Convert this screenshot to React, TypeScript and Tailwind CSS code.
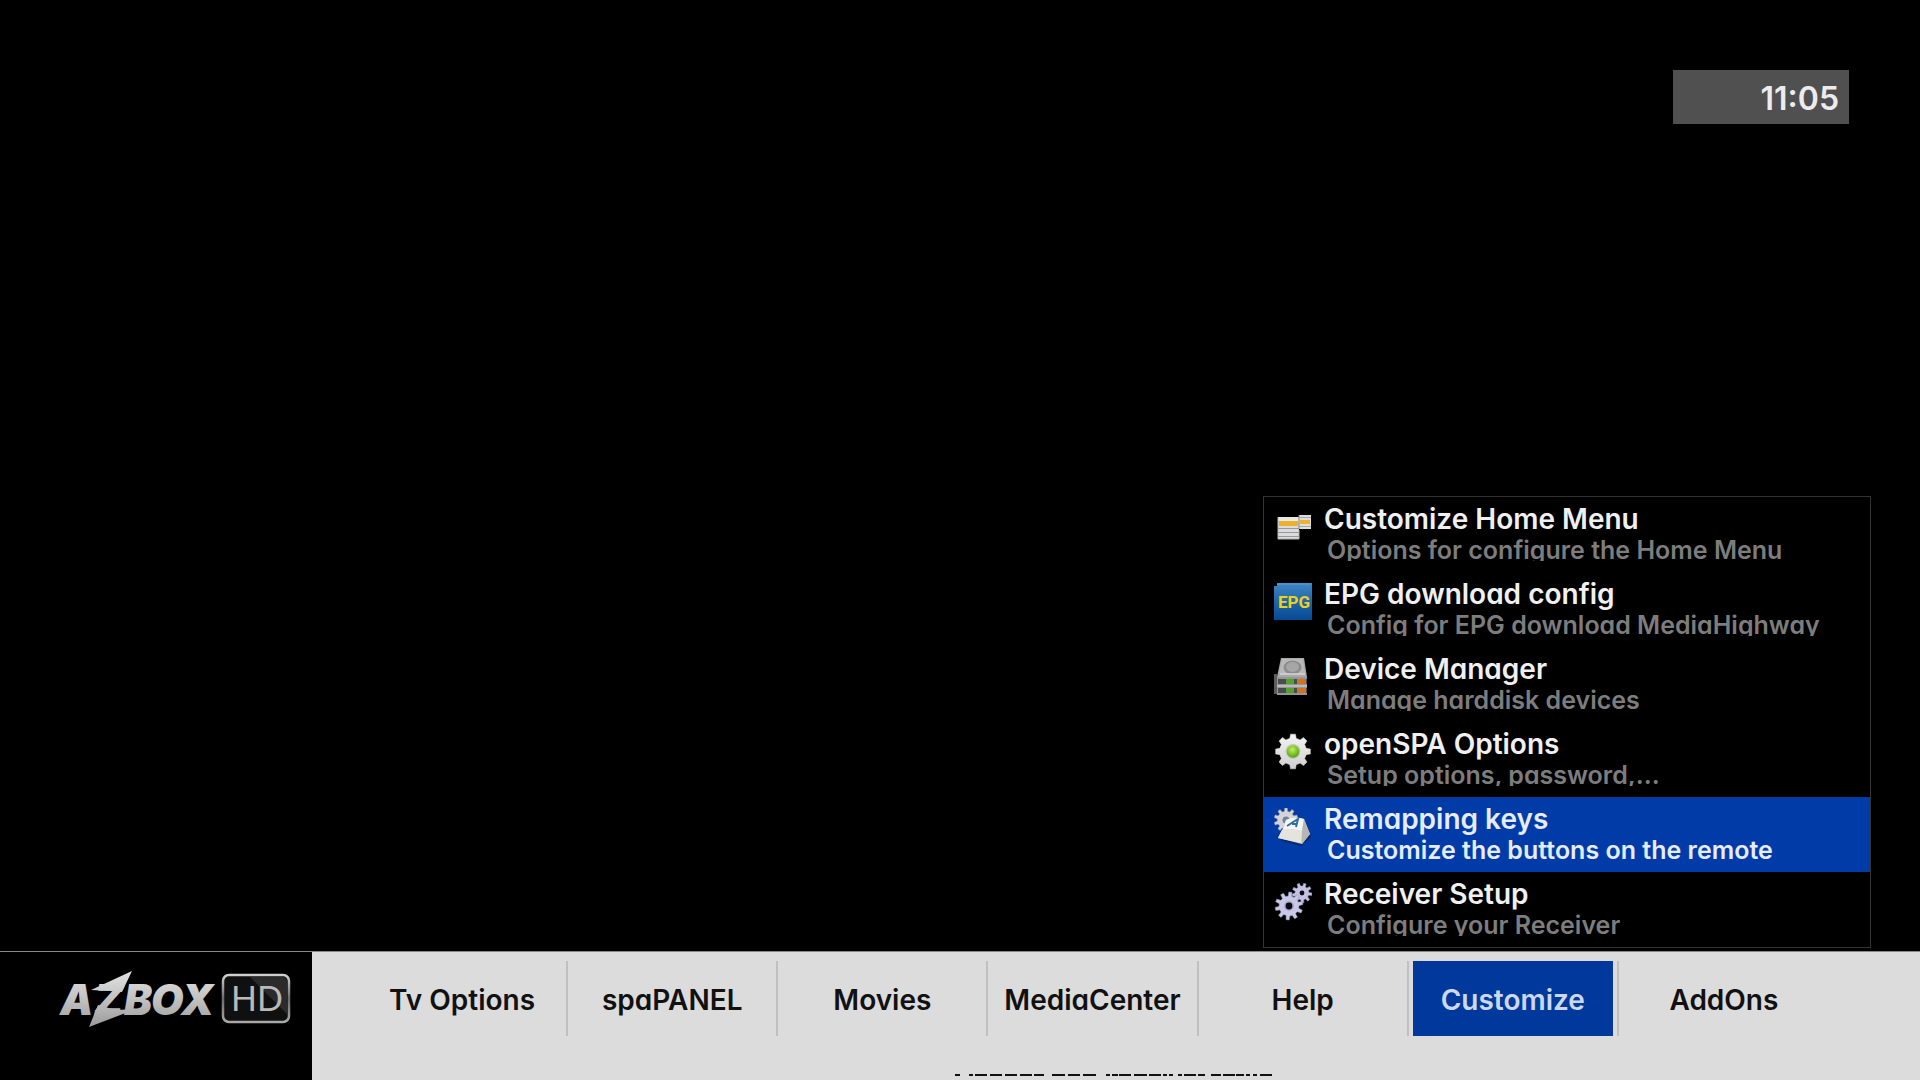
import type { ReactNode } from "react";

/** Outline of a cog with square teeth. */
function gearPath(cx: number, cy: number, outer: number, inner: number, teeth: number, turn = 0) {
  const points: string[] = [];
  const step = (Math.PI * 2) / teeth;
  for (let i = 0; i < teeth; i++) {
    const mid = i * step + turn;
    const corners: [number, number][] = [
      [inner, mid - step * 0.3],
      [outer, mid - step * 0.18],
      [outer, mid + step * 0.18],
      [inner, mid + step * 0.3],
    ];
    for (const [r, a] of corners) {
      points.push(`${(cx + r * Math.sin(a)).toFixed(2)} ${(cy - r * Math.cos(a)).toFixed(2)}`);
    }
  }
  return `M${points.join("L")}Z`;
}

function Icon({ children }: { children: ReactNode }) {
  return (
    <svg className="mt-[11px] size-[38px] shrink-0" viewBox="0 0 38 38" aria-hidden="true">
      {children}
    </svg>
  );
}

function WindowsIcon() {
  return (
    <Icon>
      <rect x="4" y="9" width="21" height="22" fill="#dcdcdc" />
      <rect x="4" y="9" width="21" height="4" fill="#e8e8e4" />
      <rect x="5" y="13" width="19" height="5" fill="#eeb02c" />
      <path d="M4 20.500H25M4 24.500H25M4 28.500H25" stroke="#98989c" strokeWidth="1" />
      <path d="M4 9V31H25V22" fill="none" stroke="#b4b4b4" strokeWidth="1" />
      <rect x="25" y="7" width="12" height="14" fill="#dedede" />
      <rect x="26" y="12" width="10" height="4" fill="#efb22f" />
      <path d="M25 9.500H37M25 18.500H37" stroke="#a8a8a8" strokeWidth="1" />
      <path d="M25 7V21" stroke="#8a8a8a" strokeWidth="1" />
    </Icon>
  );
}

function EpgIcon() {
  return (
    <Icon>
      <defs>
        <linearGradient id="epg" x1="0" y1="0" x2="0" y2="1">
          <stop offset="0" stopColor="#3f86c4" />
          <stop offset="0.500" stopColor="#1f66ad" />
          <stop offset="1" stopColor="#064a92" />
        </linearGradient>
      </defs>
      <path d="M3 0H38V37H0V3H3Z" fill="url(#epg)" />
      <path d="M3 1H37" stroke="#5b9bd2" strokeWidth="1" />
      <text x="4" y="25" className="font-['Roboto'] text-[17px] font-bold" fill="#f2cf1c">
        EPG
      </text>
    </Icon>
  );
}

function DrivesIcon() {
  return (
    <Icon>
      <path d="M7 0H30L33 19H3Z" fill="#a9a9a9" />
      <path d="M8 1H29L31 16H5Z" fill="#b9b9b9" />
      <ellipse cx="18.500" cy="9.500" rx="9" ry="7" fill="#8d8d8d" />
      <ellipse cx="18.500" cy="9" rx="6.500" ry="5" fill="#a6a6a6" />
      <path d="M6 16H31" stroke="#d6d6d6" strokeWidth="1.500" />
      <rect x="0" y="16" width="3" height="20" fill="#5d5d5d" />
      <rect x="3" y="19" width="30" height="18" fill="#969696" />
      <rect x="4" y="21" width="29" height="5" fill="#474e4e" />
      <rect x="4" y="30" width="29" height="5" fill="#474e4e" />
      <rect x="12" y="21" width="8" height="5" fill="#55a22b" />
      <rect x="12" y="30" width="8" height="5" fill="#55a22b" />
      <rect x="23" y="21" width="9" height="5" fill="#cf7327" />
      <rect x="23" y="30" width="9" height="5" fill="#cf7327" />
      <path d="M3 28H33" stroke="#c4c4c4" strokeWidth="1.500" />
    </Icon>
  );
}

function GreenGearIcon() {
  return (
    <Icon>
      <defs>
        <radialGradient id="greenDot" cx="0.450" cy="0.350" r="0.700">
          <stop offset="0" stopColor="#c0ee6a" />
          <stop offset="0.500" stopColor="#84c92c" />
          <stop offset="1" stopColor="#4f9414" />
        </radialGradient>
        <linearGradient id="steel" x1="0" y1="0" x2="0" y2="1">
          <stop offset="0" stopColor="#f4f4f4" />
          <stop offset="1" stopColor="#cfcfcf" />
        </linearGradient>
      </defs>
      <path d={gearPath(19, 18.5, 17.5, 13.6, 8)} fill="url(#steel)" strokeLinejoin="round" stroke="#dedede" strokeWidth="0.500" />
      <circle cx="19" cy="18.500" r="7.500" fill="#c2c8b8" />
      <circle cx="19" cy="18.500" r="6.200" fill="url(#greenDot)" />
    </Icon>
  );
}

function KeyGearIcon() {
  return (
    <Icon>
      <path d={gearPath(12, 12, 12, 8.8, 10)} fill="#d5d5d8" stroke="#8d8f96" strokeWidth="0.500" />
      <circle cx="12" cy="12" r="3.500" fill="#73829a" />
      <path d="M4 28L8 33L27 38L37 29L34 21Z" fill="#10203f" opacity="0.600" />
      <path d="M12 12Q20 8 30 11L36 26L28 36L4 30L9 20Z" fill="#c9c9c6" />
      <path d="M12 12Q20 8 30 11L28 23Q18 20 9 22Z" fill="#f4f6f6" />
      <path d="M8 22Q18 20 28 23L27 35L4 30Z" fill="#e4e4df" />
      <path d="M30 11L36 26L28 36L28 23Z" fill="#b7b7b2" />
      <path d="M13 18L24 11L22 19M18 16L23 16" fill="none" stroke="#2f6f9c" strokeWidth="2" />
    </Icon>
  );
}

function TwoGearsIcon() {
  return (
    <Icon>
      <path d={gearPath(28, 10, 10, 7, 9, 0.3)} fill="#c3c2e2" stroke="#8f8eb8" strokeWidth="0.500" />
      <circle cx="28" cy="10" r="2.400" fill="#0a0a12" />
      <path d={gearPath(15, 23, 14, 10, 10, 0.1)} fill="#c9c8e6" stroke="#8f8eb8" strokeWidth="0.500" />
      <circle cx="15" cy="23" r="5" fill="#aaa9cc" />
      <circle cx="15" cy="23" r="3.400" fill="#0a0a12" />
    </Icon>
  );
}

function Logo() {
  return (
    <svg className="ml-[58px] mt-[15px] h-[64px] w-[236px]" viewBox="58 967 236 64" role="img" aria-label="AZBOX HD">
      <defs>
        <linearGradient id="silver" gradientUnits="userSpaceOnUse" x1="0" y1="971" x2="0" y2="1027">
          <stop offset="0" stopColor="#e2e2e2" />
          <stop offset="0.500" stopColor="#c2c2c2" />
          <stop offset="1" stopColor="#9b9b9b" />
        </linearGradient>
        <linearGradient id="badgeEdge" x1="0" y1="0" x2="0" y2="1">
          <stop offset="0" stopColor="#d0d0d0" />
          <stop offset="0.500" stopColor="#6c6c6c" />
          <stop offset="1" stopColor="#a8a8a8" />
        </linearGradient>
      </defs>
      <g fill="url(#silver)" className="font-['Inter'] text-[42px] font-black italic">
        <text x="60" y="1015">A</text>
        <text x="94" y="1015">Z</text>
        <text x="124" y="1015">B</text>
        <text x="151" y="1015">O</text>
        <text x="181" y="1015">X</text>
      </g>
      <path d="M91 990L132 971L122 992L110 991Z" fill="url(#silver)" />
      <path d="M98 1005L89 1027L136 1009L116 1010Z" fill="url(#silver)" />
      <rect x="223" y="975" width="66" height="47" rx="6" fill="#101010" stroke="url(#badgeEdge)" strokeWidth="2.500" />
      <path d="M250 977H282Q287 977 287 982V1014Z" fill="#2b2b2b" />
      <text x="231" y="1011" fill="#b9b9b9" className="font-['Lato'] text-[34px] font-normal">
        HD
      </text>
    </svg>
  );
}

const menu = [
  { title: "Customize Home Menu", note: "Options for configure the Home Menu", icon: <WindowsIcon /> },
  { title: "EPG download config", note: "Config for EPG download MediaHighway", icon: <EpgIcon /> },
  { title: "Device Manager", note: "Manage harddisk devices", icon: <DrivesIcon /> },
  { title: "openSPA Options", note: "Setup options, password,...", icon: <GreenGearIcon /> },
  { title: "Remapping keys", note: "Customize the buttons on the remote", icon: <KeyGearIcon />, active: true },
  { title: "Receiver Setup", note: "Configure your Receiver", icon: <TwoGearsIcon /> },
];

const tabs = ["Tv Options", "spaPANEL", "Movies", "MediaCenter", "Help", "Customize", "AddOns"];

/** Start and length of each dash in the ticker strip. */
const dashes = [
  [0, 5], [14, 4], [20, 12], [35, 12], [50, 12], [65, 12], [79, 10],
  [97, 13], [113, 12], [128, 13], [151, 4], [157, 6], [164, 12], [179, 13], [194, 12], [208, 4], [214, 4],
  [223, 4], [229, 12], [243, 7], [256, 10], [268, 12], [281, 8], [291, 4], [298, 4], [305, 12],
];

export default function App() {
  return (
    <div className="flex min-h-screen flex-col bg-black font-['Inter',sans-serif] font-semibold [font-feature-settings:'cv11']">
      <header className="flex justify-end pr-[71px] pt-[70px]">
        <time className="flex h-[54px] w-[176px] items-center justify-end bg-[#505050] pr-[10px] pt-[4px] text-[32px] text-[#ececec]">
          11:05
        </time>
      </header>

      <main className="flex flex-1 items-end justify-end pb-[3px] pr-[49px]">
        <ul className="w-[608px] border border-[#333333]">
          {menu.map((item) => (
            <li key={item.title}>
              <button
                type="button"
                className={`flex w-full items-start pb-[11px] pl-[10px] pt-0 text-left ${item.active ? "bg-[#003ba8]" : ""}`}
              >
                {item.icon}
                <span className="ml-[12px] block min-w-0 pt-[6px]">
                  <span className={`block whitespace-nowrap text-[28px] leading-[32px] ${item.active ? "text-[#e6ecfa]" : "text-[#f0f0f0]"}`}>
                    {item.title}
                  </span>
                  <span
                    className={`block h-[26px] overflow-hidden whitespace-nowrap pl-[3px] text-[25px] leading-[30px] ${
                      item.active ? "text-[#e6ecfa]" : "text-[#7d7d7d]"
                    }`}
                  >
                    {item.note}
                  </span>
                </span>
              </button>
            </li>
          ))}
        </ul>
      </main>

      <footer className="flex border-t border-[#8a8a8a]">
        <div className="w-[312px] shrink-0 bg-black">
          <Logo />
        </div>
        <div className="min-w-0 flex-1 bg-[#dcdcdc] pl-[46px] pr-[91px] pt-[9px]">
          <nav className="grid grid-cols-7">
            {tabs.map((tab, i) => (
              <div key={tab} className={`flex h-[75px] ${i < tabs.length - 1 ? "border-r-2 border-[#c0c0c0]" : ""}`}>
                <button
                  type="button"
                  className={`mx-[4px] flex-1 whitespace-nowrap pt-[2px] text-[28px] ${
                    tab === "Customize" ? "bg-[#00389c] text-[#ccd8ee]" : "text-[#111111]"
                  }`}
                >
                  {tab}
                </button>
              </div>
            ))}
          </nav>
          <svg className="mx-auto mt-[38px] h-[6px] w-[318px] translate-x-[20px]" viewBox="0 0 318 6" aria-hidden="true">
            {dashes.map(([x, w]) => (
              <rect key={x} x={x} y="0" width={w} height="2" fill="#111111" />
            ))}
          </svg>
        </div>
      </footer>
    </div>
  );
}
